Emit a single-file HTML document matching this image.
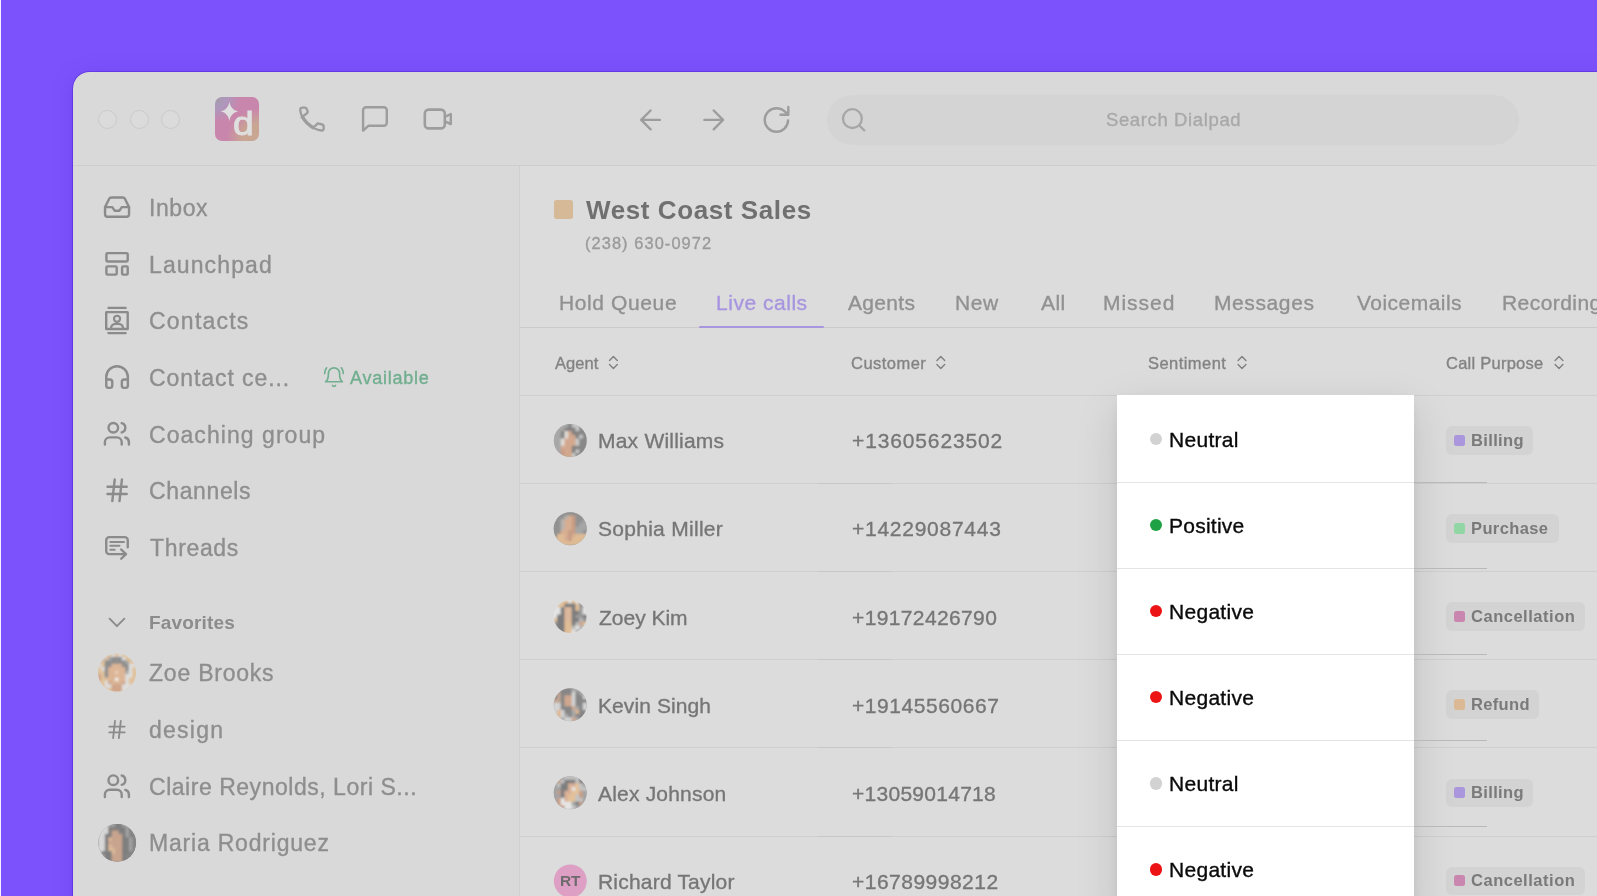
<!DOCTYPE html>
<html lang="en">
<head>
<meta charset="utf-8">
<title>Dialpad – West Coast Sales</title>
<style>
*{box-sizing:border-box;margin:0;padding:0}
html,body{width:1597px;height:896px;overflow:hidden}
body{background:#7c52fd;font-family:"Liberation Sans",Arial,sans-serif;position:relative}
.abs{position:absolute}
.t{position:absolute;white-space:nowrap;line-height:30px;height:30px;display:block;will-change:transform}
#strip{left:0;top:0;width:1px;height:896px;background:#f4f0ff}
#win{left:73px;top:72px;width:1600px;height:900px;background:#d9d9d9;border-top-left-radius:16.5px;box-shadow:0 0 0 .8px rgba(70,25,210,.5),0 3px 24px 0 rgba(30,0,110,.13);overflow:hidden}
#hdrline{left:73px;top:165px;width:1600px;height:1px;background:#cecece}
#main{left:519px;top:166px;width:1100px;height:740px;background:#dcdcdc;border-left:1px solid #cfcfcf}
.tl{width:19px;height:19px;border-radius:50%;border:1.3px solid #cbcbcb;background:#dbdbdb}
#search{left:827px;top:95px;width:692px;height:50px;border-radius:25px;background:#d4d4d4}
#logo{left:214.8px;top:96.9px;width:44.2px;height:44.2px;border-radius:7px;background:radial-gradient(circle at 2% 2%,#a49ba9 0%,#ae97bd 17%,rgba(201,134,172,0) 40%),radial-gradient(circle at 98% 98%,#c9a793 0%,#c9a592 26%,rgba(200,134,172,0) 52%),#c986ac;overflow:hidden}
#sq{left:554px;top:200px;width:19px;height:19px;border-radius:2.5px;background:#d6b996}
#tabline{left:520px;top:327px;width:1100px;height:1px;background:#cacaca}
#tabul{left:699px;top:325.5px;width:125px;height:2.5px;background:#a896de;border-radius:1px}
.rl{left:520px;width:1100px;height:1px;background:#cfcfcf}
.seg{height:1px;background:#b9b9b9}
#panel{left:1117px;top:395px;width:297.3px;height:520px;background:#fff;box-shadow:0 14px 40px 0 rgba(0,0,0,.125),0 5px 12px 0 rgba(0,0,0,.06)}
.pl{left:1117px;width:297.3px;height:1px;background:#e4e4e4}
.dot{width:12.3px;height:12.3px;border-radius:50%}
.bd{left:1446px;height:28.5px;border-radius:6px;background:#d3d3d3}
.bs{left:1454px;width:11px;height:11px;border-radius:2.5px}
.av{width:33px;height:33px;border-radius:50%;overflow:hidden}
svg{position:absolute;overflow:visible}
.ic{fill:none;stroke:#8f8f8f;stroke-width:2;stroke-linecap:round;stroke-linejoin:round}
</style>
</head>
<body>
<div id="strip" class="abs"></div>
<div id="win" class="abs"></div>
<div id="hdrline" class="abs"></div>
<div id="main" class="abs"></div>

<!-- traffic lights -->
<div class="abs tl" style="left:98px;top:109.5px"></div>
<div class="abs tl" style="left:129.7px;top:109.5px"></div>
<div class="abs tl" style="left:161px;top:109.5px"></div>

<div id="logo" class="abs"></div>
<div id="search" class="abs"></div>
<!-- logo glyphs -->
<svg class="abs" style="left:0;top:0" width="1597" height="896" viewBox="0 0 1597 896">
<path d="M229.4 101.60000000000001 C230.1224 106.99000000000001 233.27 110.5768 238.0 111.4 C233.27 112.2232 230.1224 115.81 229.4 121.2 C228.6776 115.81 225.53 112.2232 220.8 111.4 C225.53 110.5768 228.6776 106.99000000000001 229.4 101.60000000000001Z" fill="#dfdfdf"/>
<!-- header icons -->
<g fill="none" stroke="#9d9d9d" stroke-width="2.4" stroke-linecap="round" stroke-linejoin="round">
<path d="M301.7 117.1L307 113.3Q308 112.4 307.6 111.2L306.7 108.8Q306.3 107.6 305 107.6L302.2 107.7Q300.2 107.8 300.2 109.8C300.6 118.5 311 129.5 321.5 130.5Q323.7 130.6 323.7 128.600L323.6 126Q323.6 124.8 322.3 124.5L318.9 123.600Q317.7 123.2 316.8 124.2L313.5 127.6" stroke-width="2.35"/><path d="M302.1 116.3Q306 123.700 314 128.2" stroke-width="3.4" stroke-linecap="butt"/>
<path d="M363.1 130.6V110.3a3 3 0 0 1 3-3h17.7a3 3 0 0 1 3 3v12.4a3 3 0 0 1-3 3H368.6Z"/>
<rect x="424.8" y="109.6" width="20" height="18.8" rx="4" stroke-width="2.6"/>
<path d="M445.6 116.5L450.8 114.1V124.1L445.600 121.600"/>
<path d="M650.6 110.5l-9.4 9.4 9.4 9.4M641.2 119.9h18.7"/>
<path d="M713.7 110.5l9.4 9.4-9.4 9.4M723.1 119.9h-18.7"/>
<path d="M788.1 120.4A11.7 11.7 0 1 1 776.4 108.3c3.3 0 6.4 1.3 8.8 3.6l3.1 2.7M788.3 106.9v7.8h-7.8"/>
</g>
<g fill="none" stroke="#a7a7a7" stroke-width="2.3" stroke-linecap="round"><circle cx="852.4" cy="118.6" r="9.4"/><path d="M859.3 125.5l5 4.9"/></g>
</svg>
<span class="abs" id="logod" style="left:232.7px;top:104.1px;font:400 33px/40px 'Liberation Sans',Arial,sans-serif;color:#dfdfdf;-webkit-text-stroke:0.9px #dfdfdf;height:40px;transform-origin:0 0;transform:scaleX(1.13);will-change:transform">d</span>

<svg class="abs" style="left:0;top:0" width="1597" height="896" viewBox="0 0 1597 896">
<g fill="none" stroke="#8b8b8b" stroke-width="2.4" stroke-linecap="round" stroke-linejoin="round">
<g transform="translate(102.65 192.70) scale(1.2)" stroke-width="2"><path d="M22 12h-6l-2 3h-4l-2-3H2"/><path d="M5.45 5.11 2 12v6a2 2 0 0 0 2 2h16a2 2 0 0 0 2-2v-6l-3.45-6.89A2 2 0 0 0 16.76 4H7.24a2 2 0 0 0-1.79 1.11z"/></g>
<rect x="106.4" y="253.15" width="21.3" height="8.35" rx="1.2"/><rect x="106.4" y="266.4" width="10.3" height="8.2" rx="1.2"/><rect x="122.1" y="266.4" width="5.6" height="8.2" rx="1.2"/>
<path d="M108.4 307.9h17.3M108.3 333.1h17.5" stroke-width="2.1"/><rect x="106.2" y="312.1" width="21.5" height="16.9" rx="0.3" stroke-linejoin="miter"/><circle cx="117.05" cy="318.8" r="3.05" stroke-width="2.2"/><path d="M111 329v-.6a4.6 4.600 0 0 1 4.600-4.600h2.900a4.600 4.600 0 0 1 4.600 4.600v.6" stroke-width="2.2"/>
<g transform="translate(102.65 362.65) scale(1.2)" stroke-width="2"><path d="M3 14h3a2 2 0 0 1 2 2v3a2 2 0 0 1-2 2H5a2 2 0 0 1-2-2v-7a9 9 0 0 1 18 0v7a2 2 0 0 1-2 2h-1a2 2 0 0 1-2-2v-3a2 2 0 0 1 2-2h3"/></g>
<g transform="translate(102.50 419.35) scale(1.2)" stroke-width="2"><path d="M16 21v-2a4 4 0 0 0-4-4H6a4 4 0 0 0-4 4v2"/><circle cx="9" cy="7" r="4"/><path d="M22 21v-2a4 4 0 0 0-3-3.87"/><path d="M16 3.13a4 4 0 0 1 0 7.75"/></g>
<g transform="translate(102.70 475.95) scale(1.2)" stroke-width="2"><path d="M4 9h16M4 15h16M10 3 8 21M16 3l-2 18"/></g>
<path d="M127.75 547.3V540.1a3 3 0 0 0-3-3H109.25a3 3 0 0 0-3 3v11.05a3 3 0 0 0 3 3H125.8M121.2 549.5l4.8 4.65-4.8 4.6"/><path d="M110.3 542h13.700M110.300 545.800h9.200M110.300 549.800h4.400" stroke-width="2"/>
<path d="M109.6 618.7l7.300 7.500 7.500-7.500" stroke-width="1.9"/>
<g transform="translate(105.43 717.98) scale(0.96)" stroke-width="1.9"><path d="M4 9h16M4 15h16M10 3 8 21M16 3l-2 18"/></g>
<g transform="translate(102.50 771.75) scale(1.2)" stroke-width="2"><path d="M16 21v-2a4 4 0 0 0-4-4H6a4 4 0 0 0-4 4v2"/><circle cx="9" cy="7" r="4"/><path d="M22 21v-2a4 4 0 0 0-3-3.87"/><path d="M16 3.13a4 4 0 0 1 0 7.75"/></g>
</g>
<g fill="none" stroke="#72ae8f" stroke-linecap="round" stroke-linejoin="round"><g transform="translate(322.84 365.94) scale(0.93)" stroke-width="1.8"><path d="M6 8a6 6 0 0 1 12 0c0 7 3 9 3 9H3s3-2 3-9"/><path d="M10.3 21a1.94 1.94 0 0 0 3.4 0"/><path d="M4 2C2.8 3.7 2 5.7 2 8"/><path d="M22 8c0-2.300-.8-4.300-2-6"/></g></g>
<g fill="none" stroke="#808080" stroke-width="1.4" stroke-linecap="round" stroke-linejoin="round"><path d="M609.5 360.5l3.9-3.9 3.9 3.9M609.5 364.5l3.9 3.9 3.9-3.9"/><path d="M936.9 360.5l3.9-3.9 3.9 3.9M936.9 364.5l3.9 3.9 3.9-3.9"/><path d="M1238.1 360.5l3.9-3.9 3.9 3.9M1238.1 364.5l3.9 3.9 3.9-3.9"/><path d="M1555.1 360.5l3.9-3.9 3.9 3.9M1555.1 364.5l3.9 3.9 3.9-3.9"/></g>
</svg>

<div id="sq" class="abs"></div>
<div id="tabline" class="abs"></div>
<div id="tabul" class="abs"></div>

<!-- row lines -->
<div class="abs rl" style="top:395px"></div>
<div class="abs rl" style="top:483.1px"></div>
<div class="abs rl" style="top:571.2px"></div>
<div class="abs rl" style="top:659.3px"></div>
<div class="abs rl" style="top:747.4px"></div>
<div class="abs rl" style="top:835.5px"></div>

<!--AVSTART--><svg class="abs" style="left:0;top:0" width="1597" height="896" viewBox="0 0 1597 896">
<defs><filter id="avb" x="-10%" y="-10%" width="120%" height="120%"><feGaussianBlur stdDeviation="1.1"/></filter></defs>
<clipPath id="a0"><circle cx="117" cy="672.7" r="18.9"/></clipPath><g clip-path="url(#a0)"><rect x="96.1" y="651.8" width="41.8" height="41.8" fill="#e0c29e"/><g filter="url(#avb)"><rect x="97.8" y="653.5" width="4.0" height="4.0" fill="#e0c29e"/><rect x="101.2" y="653.5" width="4.0" height="4.0" fill="#e0c29e"/><rect x="104.7" y="653.5" width="4.0" height="4.0" fill="#e0c29e"/><rect x="108.1" y="653.5" width="4.0" height="4.0" fill="#e0c29e"/><rect x="111.5" y="653.5" width="4.0" height="4.0" fill="#dedede"/><rect x="115.0" y="653.5" width="4.0" height="4.0" fill="#e0c29e"/><rect x="118.4" y="653.5" width="4.0" height="4.0" fill="#dedede"/><rect x="121.9" y="653.5" width="4.0" height="4.0" fill="#e0c29e"/><rect x="125.3" y="653.5" width="4.0" height="4.0" fill="#e0c29e"/><rect x="128.7" y="653.5" width="4.0" height="4.0" fill="#e0c29e"/><rect x="132.2" y="653.5" width="4.0" height="4.0" fill="#e0c29e"/><rect x="97.8" y="656.9" width="4.0" height="4.0" fill="#bdbdbd"/><rect x="101.2" y="656.9" width="4.0" height="4.0" fill="#bdbdbd"/><rect x="104.7" y="656.9" width="4.0" height="4.0" fill="#e0c29e"/><rect x="108.1" y="656.9" width="4.0" height="4.0" fill="#a8a8a8"/><rect x="111.5" y="656.9" width="4.0" height="4.0" fill="#8e8e8e"/><rect x="115.0" y="656.9" width="4.0" height="4.0" fill="#8e8e8e"/><rect x="118.4" y="656.9" width="4.0" height="4.0" fill="#8e8e8e"/><rect x="121.9" y="656.9" width="4.0" height="4.0" fill="#dedede"/><rect x="125.3" y="656.9" width="4.0" height="4.0" fill="#e0c29e"/><rect x="128.7" y="656.9" width="4.0" height="4.0" fill="#e0c29e"/><rect x="132.2" y="656.9" width="4.0" height="4.0" fill="#e0c29e"/><rect x="97.8" y="660.4" width="4.0" height="4.0" fill="#bdbdbd"/><rect x="101.2" y="660.4" width="4.0" height="4.0" fill="#e0c29e"/><rect x="104.7" y="660.4" width="4.0" height="4.0" fill="#8e8e8e"/><rect x="108.1" y="660.4" width="4.0" height="4.0" fill="#8e8e8e"/><rect x="111.5" y="660.4" width="4.0" height="4.0" fill="#8e8e8e"/><rect x="115.0" y="660.4" width="4.0" height="4.0" fill="#8e8e8e"/><rect x="118.4" y="660.4" width="4.0" height="4.0" fill="#8e8e8e"/><rect x="121.9" y="660.4" width="4.0" height="4.0" fill="#8e8e8e"/><rect x="125.3" y="660.4" width="4.0" height="4.0" fill="#a8a8a8"/><rect x="128.7" y="660.4" width="4.0" height="4.0" fill="#e0c29e"/><rect x="132.2" y="660.4" width="4.0" height="4.0" fill="#e0c29e"/><rect x="97.8" y="663.8" width="4.0" height="4.0" fill="#dedede"/><rect x="101.2" y="663.8" width="4.0" height="4.0" fill="#e0c29e"/><rect x="104.7" y="663.8" width="4.0" height="4.0" fill="#8e8e8e"/><rect x="108.1" y="663.8" width="4.0" height="4.0" fill="#8e8e8e"/><rect x="111.5" y="663.8" width="4.0" height="4.0" fill="#dcb596"/><rect x="115.0" y="663.8" width="4.0" height="4.0" fill="#dcb596"/><rect x="118.4" y="663.8" width="4.0" height="4.0" fill="#dcb596"/><rect x="121.9" y="663.8" width="4.0" height="4.0" fill="#8e8e8e"/><rect x="125.3" y="663.8" width="4.0" height="4.0" fill="#8e8e8e"/><rect x="128.7" y="663.8" width="4.0" height="4.0" fill="#dedede"/><rect x="132.2" y="663.8" width="4.0" height="4.0" fill="#dedede"/><rect x="97.8" y="667.2" width="4.0" height="4.0" fill="#e0c29e"/><rect x="101.2" y="667.2" width="4.0" height="4.0" fill="#dedede"/><rect x="104.7" y="667.2" width="4.0" height="4.0" fill="#8e8e8e"/><rect x="108.1" y="667.2" width="4.0" height="4.0" fill="#dcb596"/><rect x="111.5" y="667.2" width="4.0" height="4.0" fill="#dcb596"/><rect x="115.0" y="667.2" width="4.0" height="4.0" fill="#dcb596"/><rect x="118.4" y="667.2" width="4.0" height="4.0" fill="#dcb596"/><rect x="121.9" y="667.2" width="4.0" height="4.0" fill="#dcb596"/><rect x="125.3" y="667.2" width="4.0" height="4.0" fill="#8e8e8e"/><rect x="128.7" y="667.2" width="4.0" height="4.0" fill="#dedede"/><rect x="132.2" y="667.2" width="4.0" height="4.0" fill="#e0c29e"/><rect x="97.8" y="670.7" width="4.0" height="4.0" fill="#e0c29e"/><rect x="101.2" y="670.7" width="4.0" height="4.0" fill="#e0c29e"/><rect x="104.7" y="670.7" width="4.0" height="4.0" fill="#8e8e8e"/><rect x="108.1" y="670.7" width="4.0" height="4.0" fill="#dcb596"/><rect x="111.5" y="670.7" width="4.0" height="4.0" fill="#dcb596"/><rect x="115.0" y="670.7" width="4.0" height="4.0" fill="#e6cdb6"/><rect x="118.4" y="670.7" width="4.0" height="4.0" fill="#dcb596"/><rect x="121.9" y="670.7" width="4.0" height="4.0" fill="#dcb596"/><rect x="125.3" y="670.7" width="4.0" height="4.0" fill="#a8a8a8"/><rect x="128.7" y="670.7" width="4.0" height="4.0" fill="#dedede"/><rect x="132.2" y="670.7" width="4.0" height="4.0" fill="#e0c29e"/><rect x="97.8" y="674.1" width="4.0" height="4.0" fill="#d0a58a"/><rect x="101.2" y="674.1" width="4.0" height="4.0" fill="#e0c29e"/><rect x="104.7" y="674.1" width="4.0" height="4.0" fill="#8e8e8e"/><rect x="108.1" y="674.1" width="4.0" height="4.0" fill="#dcb596"/><rect x="111.5" y="674.1" width="4.0" height="4.0" fill="#dcb596"/><rect x="115.0" y="674.1" width="4.0" height="4.0" fill="#dcb596"/><rect x="118.4" y="674.1" width="4.0" height="4.0" fill="#dcb596"/><rect x="121.9" y="674.1" width="4.0" height="4.0" fill="#dcb596"/><rect x="125.3" y="674.1" width="4.0" height="4.0" fill="#dedede"/><rect x="128.7" y="674.1" width="4.0" height="4.0" fill="#dedede"/><rect x="132.2" y="674.1" width="4.0" height="4.0" fill="#e0c29e"/><rect x="97.8" y="677.6" width="4.0" height="4.0" fill="#d0a58a"/><rect x="101.2" y="677.6" width="4.0" height="4.0" fill="#e0c29e"/><rect x="104.7" y="677.6" width="4.0" height="4.0" fill="#e0c29e"/><rect x="108.1" y="677.6" width="4.0" height="4.0" fill="#dcb596"/><rect x="111.5" y="677.6" width="4.0" height="4.0" fill="#dcb596"/><rect x="115.0" y="677.6" width="4.0" height="4.0" fill="#f0ece8"/><rect x="118.4" y="677.6" width="4.0" height="4.0" fill="#dcb596"/><rect x="121.9" y="677.6" width="4.0" height="4.0" fill="#dcb596"/><rect x="125.3" y="677.6" width="4.0" height="4.0" fill="#dedede"/><rect x="128.7" y="677.6" width="4.0" height="4.0" fill="#e0c29e"/><rect x="132.2" y="677.6" width="4.0" height="4.0" fill="#e0c29e"/><rect x="97.8" y="681.0" width="4.0" height="4.0" fill="#e0c29e"/><rect x="101.2" y="681.0" width="4.0" height="4.0" fill="#e0c29e"/><rect x="104.7" y="681.0" width="4.0" height="4.0" fill="#dedede"/><rect x="108.1" y="681.0" width="4.0" height="4.0" fill="#d0a58a"/><rect x="111.5" y="681.0" width="4.0" height="4.0" fill="#dcb596"/><rect x="115.0" y="681.0" width="4.0" height="4.0" fill="#dcb596"/><rect x="118.4" y="681.0" width="4.0" height="4.0" fill="#dcb596"/><rect x="121.9" y="681.0" width="4.0" height="4.0" fill="#d0a58a"/><rect x="125.3" y="681.0" width="4.0" height="4.0" fill="#dedede"/><rect x="128.7" y="681.0" width="4.0" height="4.0" fill="#e0c29e"/><rect x="132.2" y="681.0" width="4.0" height="4.0" fill="#e0c29e"/><rect x="97.8" y="684.4" width="4.0" height="4.0" fill="#e0c29e"/><rect x="101.2" y="684.4" width="4.0" height="4.0" fill="#e0c29e"/><rect x="104.7" y="684.4" width="4.0" height="4.0" fill="#dedede"/><rect x="108.1" y="684.4" width="4.0" height="4.0" fill="#dedede"/><rect x="111.5" y="684.4" width="4.0" height="4.0" fill="#d0a58a"/><rect x="115.0" y="684.4" width="4.0" height="4.0" fill="#d0a58a"/><rect x="118.4" y="684.4" width="4.0" height="4.0" fill="#d0a58a"/><rect x="121.9" y="684.4" width="4.0" height="4.0" fill="#dedede"/><rect x="125.3" y="684.4" width="4.0" height="4.0" fill="#dedede"/><rect x="128.7" y="684.4" width="4.0" height="4.0" fill="#dedede"/><rect x="132.2" y="684.4" width="4.0" height="4.0" fill="#dedede"/><rect x="97.8" y="687.9" width="4.0" height="4.0" fill="#e0c29e"/><rect x="101.2" y="687.9" width="4.0" height="4.0" fill="#e0c29e"/><rect x="104.7" y="687.9" width="4.0" height="4.0" fill="#e0c29e"/><rect x="108.1" y="687.9" width="4.0" height="4.0" fill="#e0c29e"/><rect x="111.5" y="687.9" width="4.0" height="4.0" fill="#d0a58a"/><rect x="115.0" y="687.9" width="4.0" height="4.0" fill="#d0a58a"/><rect x="118.4" y="687.9" width="4.0" height="4.0" fill="#d0a58a"/><rect x="121.9" y="687.9" width="4.0" height="4.0" fill="#dedede"/><rect x="125.3" y="687.9" width="4.0" height="4.0" fill="#dedede"/><rect x="128.7" y="687.9" width="4.0" height="4.0" fill="#dedede"/><rect x="132.2" y="687.9" width="4.0" height="4.0" fill="#dedede"/></g></g>
<clipPath id="a1"><circle cx="117.2" cy="842.8" r="18.9"/></clipPath><g clip-path="url(#a1)"><rect x="96.3" y="821.9" width="41.8" height="41.8" fill="#858585"/><g filter="url(#avb)"><rect x="98.0" y="823.6" width="4.0" height="4.0" fill="#d8d8d8"/><rect x="101.4" y="823.6" width="4.0" height="4.0" fill="#d8d8d8"/><rect x="104.9" y="823.6" width="4.0" height="4.0" fill="#d8d8d8"/><rect x="108.3" y="823.6" width="4.0" height="4.0" fill="#a2a2a2"/><rect x="111.7" y="823.6" width="4.0" height="4.0" fill="#a2a2a2"/><rect x="115.2" y="823.6" width="4.0" height="4.0" fill="#7f7f7f"/><rect x="118.6" y="823.6" width="4.0" height="4.0" fill="#7f7f7f"/><rect x="122.1" y="823.6" width="4.0" height="4.0" fill="#a2a2a2"/><rect x="125.5" y="823.6" width="4.0" height="4.0" fill="#a2a2a2"/><rect x="128.9" y="823.6" width="4.0" height="4.0" fill="#858585"/><rect x="132.4" y="823.6" width="4.0" height="4.0" fill="#858585"/><rect x="98.0" y="827.0" width="4.0" height="4.0" fill="#d8d8d8"/><rect x="101.4" y="827.0" width="4.0" height="4.0" fill="#d8d8d8"/><rect x="104.9" y="827.0" width="4.0" height="4.0" fill="#d8d8d8"/><rect x="108.3" y="827.0" width="4.0" height="4.0" fill="#7f7f7f"/><rect x="111.7" y="827.0" width="4.0" height="4.0" fill="#7f7f7f"/><rect x="115.2" y="827.0" width="4.0" height="4.0" fill="#7f7f7f"/><rect x="118.6" y="827.0" width="4.0" height="4.0" fill="#7f7f7f"/><rect x="122.1" y="827.0" width="4.0" height="4.0" fill="#7f7f7f"/><rect x="125.5" y="827.0" width="4.0" height="4.0" fill="#a2a2a2"/><rect x="128.9" y="827.0" width="4.0" height="4.0" fill="#858585"/><rect x="132.4" y="827.0" width="4.0" height="4.0" fill="#858585"/><rect x="98.0" y="830.5" width="4.0" height="4.0" fill="#d8d8d8"/><rect x="101.4" y="830.5" width="4.0" height="4.0" fill="#d8d8d8"/><rect x="104.9" y="830.5" width="4.0" height="4.0" fill="#d8d8d8"/><rect x="108.3" y="830.5" width="4.0" height="4.0" fill="#7f7f7f"/><rect x="111.7" y="830.5" width="4.0" height="4.0" fill="#c9a48e"/><rect x="115.2" y="830.5" width="4.0" height="4.0" fill="#c9a48e"/><rect x="118.6" y="830.5" width="4.0" height="4.0" fill="#7f7f7f"/><rect x="122.1" y="830.5" width="4.0" height="4.0" fill="#7f7f7f"/><rect x="125.5" y="830.5" width="4.0" height="4.0" fill="#a2a2a2"/><rect x="128.9" y="830.5" width="4.0" height="4.0" fill="#858585"/><rect x="132.4" y="830.5" width="4.0" height="4.0" fill="#858585"/><rect x="98.0" y="833.9" width="4.0" height="4.0" fill="#d8d8d8"/><rect x="101.4" y="833.9" width="4.0" height="4.0" fill="#d8d8d8"/><rect x="104.9" y="833.9" width="4.0" height="4.0" fill="#7f7f7f"/><rect x="108.3" y="833.9" width="4.0" height="4.0" fill="#7f7f7f"/><rect x="111.7" y="833.9" width="4.0" height="4.0" fill="#c9a48e"/><rect x="115.2" y="833.9" width="4.0" height="4.0" fill="#c9a48e"/><rect x="118.6" y="833.9" width="4.0" height="4.0" fill="#c9a48e"/><rect x="122.1" y="833.9" width="4.0" height="4.0" fill="#7f7f7f"/><rect x="125.5" y="833.9" width="4.0" height="4.0" fill="#a2a2a2"/><rect x="128.9" y="833.9" width="4.0" height="4.0" fill="#858585"/><rect x="132.4" y="833.9" width="4.0" height="4.0" fill="#858585"/><rect x="98.0" y="837.3" width="4.0" height="4.0" fill="#d8d8d8"/><rect x="101.4" y="837.3" width="4.0" height="4.0" fill="#d8d8d8"/><rect x="104.9" y="837.3" width="4.0" height="4.0" fill="#7f7f7f"/><rect x="108.3" y="837.3" width="4.0" height="4.0" fill="#dcb898"/><rect x="111.7" y="837.3" width="4.0" height="4.0" fill="#c9a48e"/><rect x="115.2" y="837.3" width="4.0" height="4.0" fill="#c9a48e"/><rect x="118.6" y="837.3" width="4.0" height="4.0" fill="#c9a48e"/><rect x="122.1" y="837.3" width="4.0" height="4.0" fill="#7f7f7f"/><rect x="125.5" y="837.3" width="4.0" height="4.0" fill="#7f7f7f"/><rect x="128.9" y="837.3" width="4.0" height="4.0" fill="#a2a2a2"/><rect x="132.4" y="837.3" width="4.0" height="4.0" fill="#858585"/><rect x="98.0" y="840.8" width="4.0" height="4.0" fill="#d8d8d8"/><rect x="101.4" y="840.8" width="4.0" height="4.0" fill="#d8d8d8"/><rect x="104.9" y="840.8" width="4.0" height="4.0" fill="#7f7f7f"/><rect x="108.3" y="840.8" width="4.0" height="4.0" fill="#c9a48e"/><rect x="111.7" y="840.8" width="4.0" height="4.0" fill="#c9a48e"/><rect x="115.2" y="840.8" width="4.0" height="4.0" fill="#c9a48e"/><rect x="118.6" y="840.8" width="4.0" height="4.0" fill="#c9a48e"/><rect x="122.1" y="840.8" width="4.0" height="4.0" fill="#7f7f7f"/><rect x="125.5" y="840.8" width="4.0" height="4.0" fill="#7f7f7f"/><rect x="128.9" y="840.8" width="4.0" height="4.0" fill="#a2a2a2"/><rect x="132.4" y="840.8" width="4.0" height="4.0" fill="#858585"/><rect x="98.0" y="844.2" width="4.0" height="4.0" fill="#d8d8d8"/><rect x="101.4" y="844.2" width="4.0" height="4.0" fill="#d8d8d8"/><rect x="104.9" y="844.2" width="4.0" height="4.0" fill="#7f7f7f"/><rect x="108.3" y="844.2" width="4.0" height="4.0" fill="#dcb898"/><rect x="111.7" y="844.2" width="4.0" height="4.0" fill="#c9a48e"/><rect x="115.2" y="844.2" width="4.0" height="4.0" fill="#c9a48e"/><rect x="118.6" y="844.2" width="4.0" height="4.0" fill="#c9a48e"/><rect x="122.1" y="844.2" width="4.0" height="4.0" fill="#7f7f7f"/><rect x="125.5" y="844.2" width="4.0" height="4.0" fill="#7f7f7f"/><rect x="128.9" y="844.2" width="4.0" height="4.0" fill="#a2a2a2"/><rect x="132.4" y="844.2" width="4.0" height="4.0" fill="#858585"/><rect x="98.0" y="847.7" width="4.0" height="4.0" fill="#d8d8d8"/><rect x="101.4" y="847.7" width="4.0" height="4.0" fill="#d8d8d8"/><rect x="104.9" y="847.7" width="4.0" height="4.0" fill="#7f7f7f"/><rect x="108.3" y="847.7" width="4.0" height="4.0" fill="#dcb898"/><rect x="111.7" y="847.7" width="4.0" height="4.0" fill="#dcb898"/><rect x="115.2" y="847.7" width="4.0" height="4.0" fill="#c9a48e"/><rect x="118.6" y="847.7" width="4.0" height="4.0" fill="#c9a48e"/><rect x="122.1" y="847.7" width="4.0" height="4.0" fill="#7f7f7f"/><rect x="125.5" y="847.7" width="4.0" height="4.0" fill="#7f7f7f"/><rect x="128.9" y="847.7" width="4.0" height="4.0" fill="#a2a2a2"/><rect x="132.4" y="847.7" width="4.0" height="4.0" fill="#858585"/><rect x="98.0" y="851.1" width="4.0" height="4.0" fill="#d8d8d8"/><rect x="101.4" y="851.1" width="4.0" height="4.0" fill="#7f7f7f"/><rect x="104.9" y="851.1" width="4.0" height="4.0" fill="#7f7f7f"/><rect x="108.3" y="851.1" width="4.0" height="4.0" fill="#7f7f7f"/><rect x="111.7" y="851.1" width="4.0" height="4.0" fill="#dcb898"/><rect x="115.2" y="851.1" width="4.0" height="4.0" fill="#c9a48e"/><rect x="118.6" y="851.1" width="4.0" height="4.0" fill="#c9a48e"/><rect x="122.1" y="851.1" width="4.0" height="4.0" fill="#7f7f7f"/><rect x="125.5" y="851.1" width="4.0" height="4.0" fill="#7f7f7f"/><rect x="128.9" y="851.1" width="4.0" height="4.0" fill="#858585"/><rect x="132.4" y="851.1" width="4.0" height="4.0" fill="#858585"/><rect x="98.0" y="854.5" width="4.0" height="4.0" fill="#a2a2a2"/><rect x="101.4" y="854.5" width="4.0" height="4.0" fill="#a2a2a2"/><rect x="104.9" y="854.5" width="4.0" height="4.0" fill="#7f7f7f"/><rect x="108.3" y="854.5" width="4.0" height="4.0" fill="#7f7f7f"/><rect x="111.7" y="854.5" width="4.0" height="4.0" fill="#c9a48e"/><rect x="115.2" y="854.5" width="4.0" height="4.0" fill="#c9a48e"/><rect x="118.6" y="854.5" width="4.0" height="4.0" fill="#c9a48e"/><rect x="122.1" y="854.5" width="4.0" height="4.0" fill="#7f7f7f"/><rect x="125.5" y="854.5" width="4.0" height="4.0" fill="#858585"/><rect x="128.9" y="854.5" width="4.0" height="4.0" fill="#858585"/><rect x="132.4" y="854.5" width="4.0" height="4.0" fill="#858585"/><rect x="98.0" y="858.0" width="4.0" height="4.0" fill="#a2a2a2"/><rect x="101.4" y="858.0" width="4.0" height="4.0" fill="#a2a2a2"/><rect x="104.9" y="858.0" width="4.0" height="4.0" fill="#7f7f7f"/><rect x="108.3" y="858.0" width="4.0" height="4.0" fill="#7f7f7f"/><rect x="111.7" y="858.0" width="4.0" height="4.0" fill="#c9a48e"/><rect x="115.2" y="858.0" width="4.0" height="4.0" fill="#c9a48e"/><rect x="118.6" y="858.0" width="4.0" height="4.0" fill="#c9a48e"/><rect x="122.1" y="858.0" width="4.0" height="4.0" fill="#7f7f7f"/><rect x="125.5" y="858.0" width="4.0" height="4.0" fill="#858585"/><rect x="128.9" y="858.0" width="4.0" height="4.0" fill="#858585"/><rect x="132.4" y="858.0" width="4.0" height="4.0" fill="#858585"/></g></g>
<clipPath id="a2"><circle cx="570.3" cy="440.6" r="16.5"/></clipPath><g clip-path="url(#a2)"><rect x="551.8" y="422.1" width="37.0" height="37.0" fill="#a8a8a8"/><g filter="url(#avb)"><rect x="553.5" y="423.8" width="4.3" height="4.3" fill="#a8a8a8"/><rect x="557.2" y="423.8" width="4.3" height="4.3" fill="#a8a8a8"/><rect x="560.8" y="423.8" width="4.3" height="4.3" fill="#a8a8a8"/><rect x="564.5" y="423.8" width="4.3" height="4.3" fill="#a8a8a8"/><rect x="568.2" y="423.8" width="4.3" height="4.3" fill="#828282"/><rect x="571.8" y="423.8" width="4.3" height="4.3" fill="#c9c9c9"/><rect x="575.5" y="423.8" width="4.3" height="4.3" fill="#c9c9c9"/><rect x="579.2" y="423.8" width="4.3" height="4.3" fill="#888888"/><rect x="582.8" y="423.8" width="4.3" height="4.3" fill="#888888"/><rect x="553.5" y="427.5" width="4.3" height="4.3" fill="#a8a8a8"/><rect x="557.2" y="427.5" width="4.3" height="4.3" fill="#a8a8a8"/><rect x="560.8" y="427.5" width="4.3" height="4.3" fill="#a8a8a8"/><rect x="564.5" y="427.5" width="4.3" height="4.3" fill="#828282"/><rect x="568.2" y="427.5" width="4.3" height="4.3" fill="#828282"/><rect x="571.8" y="427.5" width="4.3" height="4.3" fill="#828282"/><rect x="575.5" y="427.5" width="4.3" height="4.3" fill="#c9c9c9"/><rect x="579.2" y="427.5" width="4.3" height="4.3" fill="#888888"/><rect x="582.8" y="427.5" width="4.3" height="4.3" fill="#888888"/><rect x="553.5" y="431.1" width="4.3" height="4.3" fill="#a8a8a8"/><rect x="557.2" y="431.1" width="4.3" height="4.3" fill="#a8a8a8"/><rect x="560.8" y="431.1" width="4.3" height="4.3" fill="#828282"/><rect x="564.5" y="431.1" width="4.3" height="4.3" fill="#e2ddd8"/><rect x="568.2" y="431.1" width="4.3" height="4.3" fill="#d3a88e"/><rect x="571.8" y="431.1" width="4.3" height="4.3" fill="#828282"/><rect x="575.5" y="431.1" width="4.3" height="4.3" fill="#828282"/><rect x="579.2" y="431.1" width="4.3" height="4.3" fill="#888888"/><rect x="582.8" y="431.1" width="4.3" height="4.3" fill="#888888"/><rect x="553.5" y="434.8" width="4.3" height="4.3" fill="#a8a8a8"/><rect x="557.2" y="434.8" width="4.3" height="4.3" fill="#a8a8a8"/><rect x="560.8" y="434.8" width="4.3" height="4.3" fill="#828282"/><rect x="564.5" y="434.8" width="4.3" height="4.3" fill="#e2ddd8"/><rect x="568.2" y="434.8" width="4.3" height="4.3" fill="#d3a88e"/><rect x="571.8" y="434.8" width="4.3" height="4.3" fill="#d3a88e"/><rect x="575.5" y="434.8" width="4.3" height="4.3" fill="#828282"/><rect x="579.2" y="434.8" width="4.3" height="4.3" fill="#c9c9c9"/><rect x="582.8" y="434.8" width="4.3" height="4.3" fill="#888888"/><rect x="553.5" y="438.5" width="4.3" height="4.3" fill="#a8a8a8"/><rect x="557.2" y="438.5" width="4.3" height="4.3" fill="#a8a8a8"/><rect x="560.8" y="438.5" width="4.3" height="4.3" fill="#e2ddd8"/><rect x="564.5" y="438.5" width="4.3" height="4.3" fill="#d3a88e"/><rect x="568.2" y="438.5" width="4.3" height="4.3" fill="#d3a88e"/><rect x="571.8" y="438.5" width="4.3" height="4.3" fill="#d3a88e"/><rect x="575.5" y="438.5" width="4.3" height="4.3" fill="#c9c9c9"/><rect x="579.2" y="438.5" width="4.3" height="4.3" fill="#888888"/><rect x="582.8" y="438.5" width="4.3" height="4.3" fill="#888888"/><rect x="553.5" y="442.1" width="4.3" height="4.3" fill="#a8a8a8"/><rect x="557.2" y="442.1" width="4.3" height="4.3" fill="#a8a8a8"/><rect x="560.8" y="442.1" width="4.3" height="4.3" fill="#e2ddd8"/><rect x="564.5" y="442.1" width="4.3" height="4.3" fill="#d3a88e"/><rect x="568.2" y="442.1" width="4.3" height="4.3" fill="#d3a88e"/><rect x="571.8" y="442.1" width="4.3" height="4.3" fill="#d3a88e"/><rect x="575.5" y="442.1" width="4.3" height="4.3" fill="#c9c9c9"/><rect x="579.2" y="442.1" width="4.3" height="4.3" fill="#888888"/><rect x="582.8" y="442.1" width="4.3" height="4.3" fill="#888888"/><rect x="553.5" y="445.8" width="4.3" height="4.3" fill="#a8a8a8"/><rect x="557.2" y="445.8" width="4.3" height="4.3" fill="#a8a8a8"/><rect x="560.8" y="445.8" width="4.3" height="4.3" fill="#d3a88e"/><rect x="564.5" y="445.8" width="4.3" height="4.3" fill="#d3a88e"/><rect x="568.2" y="445.8" width="4.3" height="4.3" fill="#d3a88e"/><rect x="571.8" y="445.8" width="4.3" height="4.3" fill="#828282"/><rect x="575.5" y="445.8" width="4.3" height="4.3" fill="#828282"/><rect x="579.2" y="445.8" width="4.3" height="4.3" fill="#888888"/><rect x="582.8" y="445.8" width="4.3" height="4.3" fill="#888888"/><rect x="553.5" y="449.5" width="4.3" height="4.3" fill="#a8a8a8"/><rect x="557.2" y="449.5" width="4.3" height="4.3" fill="#a8a8a8"/><rect x="560.8" y="449.5" width="4.3" height="4.3" fill="#c99d84"/><rect x="564.5" y="449.5" width="4.3" height="4.3" fill="#d3a88e"/><rect x="568.2" y="449.5" width="4.3" height="4.3" fill="#d3a88e"/><rect x="571.8" y="449.5" width="4.3" height="4.3" fill="#828282"/><rect x="575.5" y="449.5" width="4.3" height="4.3" fill="#c9c9c9"/><rect x="579.2" y="449.5" width="4.3" height="4.3" fill="#888888"/><rect x="582.8" y="449.5" width="4.3" height="4.3" fill="#888888"/><rect x="553.5" y="453.1" width="4.3" height="4.3" fill="#a8a8a8"/><rect x="557.2" y="453.1" width="4.3" height="4.3" fill="#a8a8a8"/><rect x="560.8" y="453.1" width="4.3" height="4.3" fill="#c99d84"/><rect x="564.5" y="453.1" width="4.3" height="4.3" fill="#d3a88e"/><rect x="568.2" y="453.1" width="4.3" height="4.3" fill="#d3a88e"/><rect x="571.8" y="453.1" width="4.3" height="4.3" fill="#c9c9c9"/><rect x="575.5" y="453.1" width="4.3" height="4.3" fill="#888888"/><rect x="579.2" y="453.1" width="4.3" height="4.3" fill="#888888"/><rect x="582.8" y="453.1" width="4.3" height="4.3" fill="#888888"/></g></g>
<clipPath id="a3"><circle cx="570.2" cy="528.7" r="16.5"/></clipPath><g clip-path="url(#a3)"><rect x="551.7" y="510.2" width="37.0" height="37.0" fill="#929292"/><g filter="url(#avb)"><rect x="553.4" y="511.9" width="4.3" height="4.3" fill="#929292"/><rect x="557.1" y="511.9" width="4.3" height="4.3" fill="#929292"/><rect x="560.7" y="511.9" width="4.3" height="4.3" fill="#929292"/><rect x="564.4" y="511.9" width="4.3" height="4.3" fill="#929292"/><rect x="568.1" y="511.9" width="4.3" height="4.3" fill="#929292"/><rect x="571.7" y="511.9" width="4.3" height="4.3" fill="#929292"/><rect x="575.4" y="511.9" width="4.3" height="4.3" fill="#929292"/><rect x="579.1" y="511.9" width="4.3" height="4.3" fill="#929292"/><rect x="582.7" y="511.9" width="4.3" height="4.3" fill="#929292"/><rect x="553.4" y="515.6" width="4.3" height="4.3" fill="#929292"/><rect x="557.1" y="515.6" width="4.3" height="4.3" fill="#929292"/><rect x="560.7" y="515.6" width="4.3" height="4.3" fill="#929292"/><rect x="564.4" y="515.6" width="4.3" height="4.3" fill="#b8b4ae"/><rect x="568.1" y="515.6" width="4.3" height="4.3" fill="#d8ae92"/><rect x="571.7" y="515.6" width="4.3" height="4.3" fill="#c79c84"/><rect x="575.4" y="515.6" width="4.3" height="4.3" fill="#929292"/><rect x="579.1" y="515.6" width="4.3" height="4.3" fill="#929292"/><rect x="582.7" y="515.6" width="4.3" height="4.3" fill="#929292"/><rect x="553.4" y="519.2" width="4.3" height="4.3" fill="#929292"/><rect x="557.1" y="519.2" width="4.3" height="4.3" fill="#929292"/><rect x="560.7" y="519.2" width="4.3" height="4.3" fill="#b8b4ae"/><rect x="564.4" y="519.2" width="4.3" height="4.3" fill="#d8ae92"/><rect x="568.1" y="519.2" width="4.3" height="4.3" fill="#d8ae92"/><rect x="571.7" y="519.2" width="4.3" height="4.3" fill="#c79c84"/><rect x="575.4" y="519.2" width="4.3" height="4.3" fill="#929292"/><rect x="579.1" y="519.2" width="4.3" height="4.3" fill="#929292"/><rect x="582.7" y="519.2" width="4.3" height="4.3" fill="#a6a6a6"/><rect x="553.4" y="522.9" width="4.3" height="4.3" fill="#929292"/><rect x="557.1" y="522.9" width="4.3" height="4.3" fill="#929292"/><rect x="560.7" y="522.9" width="4.3" height="4.3" fill="#b8b4ae"/><rect x="564.4" y="522.9" width="4.3" height="4.3" fill="#d8ae92"/><rect x="568.1" y="522.9" width="4.3" height="4.3" fill="#d8ae92"/><rect x="571.7" y="522.9" width="4.3" height="4.3" fill="#c79c84"/><rect x="575.4" y="522.9" width="4.3" height="4.3" fill="#929292"/><rect x="579.1" y="522.9" width="4.3" height="4.3" fill="#a6a6a6"/><rect x="582.7" y="522.9" width="4.3" height="4.3" fill="#a6a6a6"/><rect x="553.4" y="526.6" width="4.3" height="4.3" fill="#929292"/><rect x="557.1" y="526.6" width="4.3" height="4.3" fill="#929292"/><rect x="560.7" y="526.6" width="4.3" height="4.3" fill="#b8b4ae"/><rect x="564.4" y="526.6" width="4.3" height="4.3" fill="#d8ae92"/><rect x="568.1" y="526.6" width="4.3" height="4.3" fill="#d8ae92"/><rect x="571.7" y="526.6" width="4.3" height="4.3" fill="#c79c84"/><rect x="575.4" y="526.6" width="4.3" height="4.3" fill="#a6a6a6"/><rect x="579.1" y="526.6" width="4.3" height="4.3" fill="#a6a6a6"/><rect x="582.7" y="526.6" width="4.3" height="4.3" fill="#a6a6a6"/><rect x="553.4" y="530.2" width="4.3" height="4.3" fill="#929292"/><rect x="557.1" y="530.2" width="4.3" height="4.3" fill="#929292"/><rect x="560.7" y="530.2" width="4.3" height="4.3" fill="#d8ae92"/><rect x="564.4" y="530.2" width="4.3" height="4.3" fill="#d8ae92"/><rect x="568.1" y="530.2" width="4.3" height="4.3" fill="#c79c84"/><rect x="571.7" y="530.2" width="4.3" height="4.3" fill="#c79c84"/><rect x="575.4" y="530.2" width="4.3" height="4.3" fill="#a6a6a6"/><rect x="579.1" y="530.2" width="4.3" height="4.3" fill="#a6a6a6"/><rect x="582.7" y="530.2" width="4.3" height="4.3" fill="#929292"/><rect x="553.4" y="533.9" width="4.3" height="4.3" fill="#929292"/><rect x="557.1" y="533.9" width="4.3" height="4.3" fill="#dfbb94"/><rect x="560.7" y="533.9" width="4.3" height="4.3" fill="#dfbb94"/><rect x="564.4" y="533.9" width="4.3" height="4.3" fill="#d8ae92"/><rect x="568.1" y="533.9" width="4.3" height="4.3" fill="#c79c84"/><rect x="571.7" y="533.9" width="4.3" height="4.3" fill="#d8ae92"/><rect x="575.4" y="533.9" width="4.3" height="4.3" fill="#dfbb94"/><rect x="579.1" y="533.9" width="4.3" height="4.3" fill="#dfbb94"/><rect x="582.7" y="533.9" width="4.3" height="4.3" fill="#dfbb94"/><rect x="553.4" y="537.6" width="4.3" height="4.3" fill="#dfbb94"/><rect x="557.1" y="537.6" width="4.3" height="4.3" fill="#dfbb94"/><rect x="560.7" y="537.6" width="4.3" height="4.3" fill="#dfbb94"/><rect x="564.4" y="537.6" width="4.3" height="4.3" fill="#d8ae92"/><rect x="568.1" y="537.6" width="4.3" height="4.3" fill="#c79c84"/><rect x="571.7" y="537.6" width="4.3" height="4.3" fill="#dfbb94"/><rect x="575.4" y="537.6" width="4.3" height="4.3" fill="#dfbb94"/><rect x="579.1" y="537.6" width="4.3" height="4.3" fill="#dfbb94"/><rect x="582.7" y="537.6" width="4.3" height="4.3" fill="#dfbb94"/><rect x="553.4" y="541.2" width="4.3" height="4.3" fill="#dfbb94"/><rect x="557.1" y="541.2" width="4.3" height="4.3" fill="#dfbb94"/><rect x="560.7" y="541.2" width="4.3" height="4.3" fill="#dfbb94"/><rect x="564.4" y="541.2" width="4.3" height="4.3" fill="#dfbb94"/><rect x="568.1" y="541.2" width="4.3" height="4.3" fill="#dfbb94"/><rect x="571.7" y="541.2" width="4.3" height="4.3" fill="#dfbb94"/><rect x="575.4" y="541.2" width="4.3" height="4.3" fill="#dfbb94"/><rect x="579.1" y="541.2" width="4.3" height="4.3" fill="#dfbb94"/><rect x="582.7" y="541.2" width="4.3" height="4.3" fill="#dfbb94"/></g></g>
<clipPath id="a4"><circle cx="570.2" cy="616.7" r="16.5"/></clipPath><g clip-path="url(#a4)"><rect x="551.7" y="598.2" width="37.0" height="37.0" fill="#e4e4e4"/><g filter="url(#avb)"><rect x="553.4" y="599.9" width="4.3" height="4.3" fill="#e4e4e4"/><rect x="557.1" y="599.9" width="4.3" height="4.3" fill="#e4e4e4"/><rect x="560.7" y="599.9" width="4.3" height="4.3" fill="#e0bf98"/><rect x="564.4" y="599.9" width="4.3" height="4.3" fill="#e0bf98"/><rect x="568.1" y="599.9" width="4.3" height="4.3" fill="#e4e4e4"/><rect x="571.7" y="599.9" width="4.3" height="4.3" fill="#e0bf98"/><rect x="575.4" y="599.9" width="4.3" height="4.3" fill="#e4e4e4"/><rect x="579.1" y="599.9" width="4.3" height="4.3" fill="#9a9a9a"/><rect x="582.7" y="599.9" width="4.3" height="4.3" fill="#9a9a9a"/><rect x="553.4" y="603.6" width="4.3" height="4.3" fill="#e4e4e4"/><rect x="557.1" y="603.6" width="4.3" height="4.3" fill="#e0bf98"/><rect x="560.7" y="603.6" width="4.3" height="4.3" fill="#e0bf98"/><rect x="564.4" y="603.6" width="4.3" height="4.3" fill="#7c7c7c"/><rect x="568.1" y="603.6" width="4.3" height="4.3" fill="#7c7c7c"/><rect x="571.7" y="603.6" width="4.3" height="4.3" fill="#7c7c7c"/><rect x="575.4" y="603.6" width="4.3" height="4.3" fill="#e0bf98"/><rect x="579.1" y="603.6" width="4.3" height="4.3" fill="#9a9a9a"/><rect x="582.7" y="603.6" width="4.3" height="4.3" fill="#9a9a9a"/><rect x="553.4" y="607.2" width="4.3" height="4.3" fill="#e4e4e4"/><rect x="557.1" y="607.2" width="4.3" height="4.3" fill="#e4e4e4"/><rect x="560.7" y="607.2" width="4.3" height="4.3" fill="#7c7c7c"/><rect x="564.4" y="607.2" width="4.3" height="4.3" fill="#dcb79b"/><rect x="568.1" y="607.2" width="4.3" height="4.3" fill="#dcb79b"/><rect x="571.7" y="607.2" width="4.3" height="4.3" fill="#7c7c7c"/><rect x="575.4" y="607.2" width="4.3" height="4.3" fill="#e0bf98"/><rect x="579.1" y="607.2" width="4.3" height="4.3" fill="#9a9a9a"/><rect x="582.7" y="607.2" width="4.3" height="4.3" fill="#e4e4e4"/><rect x="553.4" y="610.9" width="4.3" height="4.3" fill="#e4e4e4"/><rect x="557.1" y="610.9" width="4.3" height="4.3" fill="#e4e4e4"/><rect x="560.7" y="610.9" width="4.3" height="4.3" fill="#7c7c7c"/><rect x="564.4" y="610.9" width="4.3" height="4.3" fill="#dcb79b"/><rect x="568.1" y="610.9" width="4.3" height="4.3" fill="#dcb79b"/><rect x="571.7" y="610.9" width="4.3" height="4.3" fill="#7c7c7c"/><rect x="575.4" y="610.9" width="4.3" height="4.3" fill="#7c7c7c"/><rect x="579.1" y="610.9" width="4.3" height="4.3" fill="#9a9a9a"/><rect x="582.7" y="610.9" width="4.3" height="4.3" fill="#e4e4e4"/><rect x="553.4" y="614.6" width="4.3" height="4.3" fill="#e4e4e4"/><rect x="557.1" y="614.6" width="4.3" height="4.3" fill="#7c7c7c"/><rect x="560.7" y="614.6" width="4.3" height="4.3" fill="#7c7c7c"/><rect x="564.4" y="614.6" width="4.3" height="4.3" fill="#dcb79b"/><rect x="568.1" y="614.6" width="4.3" height="4.3" fill="#dcb79b"/><rect x="571.7" y="614.6" width="4.3" height="4.3" fill="#7c7c7c"/><rect x="575.4" y="614.6" width="4.3" height="4.3" fill="#9a9a9a"/><rect x="579.1" y="614.6" width="4.3" height="4.3" fill="#9a9a9a"/><rect x="582.7" y="614.6" width="4.3" height="4.3" fill="#7c7c7c"/><rect x="553.4" y="618.2" width="4.3" height="4.3" fill="#e0bf98"/><rect x="557.1" y="618.2" width="4.3" height="4.3" fill="#7c7c7c"/><rect x="560.7" y="618.2" width="4.3" height="4.3" fill="#7c7c7c"/><rect x="564.4" y="618.2" width="4.3" height="4.3" fill="#dcb79b"/><rect x="568.1" y="618.2" width="4.3" height="4.3" fill="#dcb79b"/><rect x="571.7" y="618.2" width="4.3" height="4.3" fill="#7c7c7c"/><rect x="575.4" y="618.2" width="4.3" height="4.3" fill="#7c7c7c"/><rect x="579.1" y="618.2" width="4.3" height="4.3" fill="#b8b8b8"/><rect x="582.7" y="618.2" width="4.3" height="4.3" fill="#9a9a9a"/><rect x="553.4" y="621.9" width="4.3" height="4.3" fill="#9a9a9a"/><rect x="557.1" y="621.9" width="4.3" height="4.3" fill="#7c7c7c"/><rect x="560.7" y="621.9" width="4.3" height="4.3" fill="#7c7c7c"/><rect x="564.4" y="621.9" width="4.3" height="4.3" fill="#e0bd96"/><rect x="568.1" y="621.9" width="4.3" height="4.3" fill="#e0bd96"/><rect x="571.7" y="621.9" width="4.3" height="4.3" fill="#7c7c7c"/><rect x="575.4" y="621.9" width="4.3" height="4.3" fill="#b8b8b8"/><rect x="579.1" y="621.9" width="4.3" height="4.3" fill="#c9a288"/><rect x="582.7" y="621.9" width="4.3" height="4.3" fill="#e0bf98"/><rect x="553.4" y="625.6" width="4.3" height="4.3" fill="#9a9a9a"/><rect x="557.1" y="625.6" width="4.3" height="4.3" fill="#7c7c7c"/><rect x="560.7" y="625.6" width="4.3" height="4.3" fill="#7c7c7c"/><rect x="564.4" y="625.6" width="4.3" height="4.3" fill="#e0bd96"/><rect x="568.1" y="625.6" width="4.3" height="4.3" fill="#e0bd96"/><rect x="571.7" y="625.6" width="4.3" height="4.3" fill="#b8b8b8"/><rect x="575.4" y="625.6" width="4.3" height="4.3" fill="#e4e4e4"/><rect x="579.1" y="625.6" width="4.3" height="4.3" fill="#b8b8b8"/><rect x="582.7" y="625.6" width="4.3" height="4.3" fill="#b8b8b8"/><rect x="553.4" y="629.2" width="4.3" height="4.3" fill="#9a9a9a"/><rect x="557.1" y="629.2" width="4.3" height="4.3" fill="#7c7c7c"/><rect x="560.7" y="629.2" width="4.3" height="4.3" fill="#7c7c7c"/><rect x="564.4" y="629.2" width="4.3" height="4.3" fill="#e0bd96"/><rect x="568.1" y="629.2" width="4.3" height="4.3" fill="#e0bd96"/><rect x="571.7" y="629.2" width="4.3" height="4.3" fill="#e4e4e4"/><rect x="575.4" y="629.2" width="4.3" height="4.3" fill="#b8b8b8"/><rect x="579.1" y="629.2" width="4.3" height="4.3" fill="#b8b8b8"/><rect x="582.7" y="629.2" width="4.3" height="4.3" fill="#b8b8b8"/></g></g>
<clipPath id="a5"><circle cx="570.2" cy="704.8" r="16.5"/></clipPath><g clip-path="url(#a5)"><rect x="551.7" y="686.3" width="37.0" height="37.0" fill="#a9a9a9"/><g filter="url(#avb)"><rect x="553.4" y="688.0" width="4.3" height="4.3" fill="#868686"/><rect x="557.1" y="688.0" width="4.3" height="4.3" fill="#868686"/><rect x="560.7" y="688.0" width="4.3" height="4.3" fill="#868686"/><rect x="564.4" y="688.0" width="4.3" height="4.3" fill="#868686"/><rect x="568.1" y="688.0" width="4.3" height="4.3" fill="#868686"/><rect x="571.7" y="688.0" width="4.3" height="4.3" fill="#a9a9a9"/><rect x="575.4" y="688.0" width="4.3" height="4.3" fill="#a9a9a9"/><rect x="579.1" y="688.0" width="4.3" height="4.3" fill="#a9a9a9"/><rect x="582.7" y="688.0" width="4.3" height="4.3" fill="#a9a9a9"/><rect x="553.4" y="691.7" width="4.3" height="4.3" fill="#868686"/><rect x="557.1" y="691.7" width="4.3" height="4.3" fill="#c3a592"/><rect x="560.7" y="691.7" width="4.3" height="4.3" fill="#868686"/><rect x="564.4" y="691.7" width="4.3" height="4.3" fill="#868686"/><rect x="568.1" y="691.7" width="4.3" height="4.3" fill="#868686"/><rect x="571.7" y="691.7" width="4.3" height="4.3" fill="#d4d4d4"/><rect x="575.4" y="691.7" width="4.3" height="4.3" fill="#868686"/><rect x="579.1" y="691.7" width="4.3" height="4.3" fill="#a9a9a9"/><rect x="582.7" y="691.7" width="4.3" height="4.3" fill="#a9a9a9"/><rect x="553.4" y="695.3" width="4.3" height="4.3" fill="#868686"/><rect x="557.1" y="695.3" width="4.3" height="4.3" fill="#c3a592"/><rect x="560.7" y="695.3" width="4.3" height="4.3" fill="#868686"/><rect x="564.4" y="695.3" width="4.3" height="4.3" fill="#cfa78f"/><rect x="568.1" y="695.3" width="4.3" height="4.3" fill="#cfa78f"/><rect x="571.7" y="695.3" width="4.3" height="4.3" fill="#d4d4d4"/><rect x="575.4" y="695.3" width="4.3" height="4.3" fill="#868686"/><rect x="579.1" y="695.3" width="4.3" height="4.3" fill="#868686"/><rect x="582.7" y="695.3" width="4.3" height="4.3" fill="#d4d4d4"/><rect x="553.4" y="699.0" width="4.3" height="4.3" fill="#c3a592"/><rect x="557.1" y="699.0" width="4.3" height="4.3" fill="#c3a592"/><rect x="560.7" y="699.0" width="4.3" height="4.3" fill="#868686"/><rect x="564.4" y="699.0" width="4.3" height="4.3" fill="#cfa78f"/><rect x="568.1" y="699.0" width="4.3" height="4.3" fill="#cfa78f"/><rect x="571.7" y="699.0" width="4.3" height="4.3" fill="#d4d4d4"/><rect x="575.4" y="699.0" width="4.3" height="4.3" fill="#868686"/><rect x="579.1" y="699.0" width="4.3" height="4.3" fill="#868686"/><rect x="582.7" y="699.0" width="4.3" height="4.3" fill="#868686"/><rect x="553.4" y="702.7" width="4.3" height="4.3" fill="#d4d4d4"/><rect x="557.1" y="702.7" width="4.3" height="4.3" fill="#d4d4d4"/><rect x="560.7" y="702.7" width="4.3" height="4.3" fill="#868686"/><rect x="564.4" y="702.7" width="4.3" height="4.3" fill="#cfa78f"/><rect x="568.1" y="702.7" width="4.3" height="4.3" fill="#cfa78f"/><rect x="571.7" y="702.7" width="4.3" height="4.3" fill="#d4d4d4"/><rect x="575.4" y="702.7" width="4.3" height="4.3" fill="#868686"/><rect x="579.1" y="702.7" width="4.3" height="4.3" fill="#868686"/><rect x="582.7" y="702.7" width="4.3" height="4.3" fill="#d4d4d4"/><rect x="553.4" y="706.3" width="4.3" height="4.3" fill="#d4d4d4"/><rect x="557.1" y="706.3" width="4.3" height="4.3" fill="#d4d4d4"/><rect x="560.7" y="706.3" width="4.3" height="4.3" fill="#868686"/><rect x="564.4" y="706.3" width="4.3" height="4.3" fill="#868686"/><rect x="568.1" y="706.3" width="4.3" height="4.3" fill="#868686"/><rect x="571.7" y="706.3" width="4.3" height="4.3" fill="#cfa78f"/><rect x="575.4" y="706.3" width="4.3" height="4.3" fill="#a9a9a9"/><rect x="579.1" y="706.3" width="4.3" height="4.3" fill="#868686"/><rect x="582.7" y="706.3" width="4.3" height="4.3" fill="#d4d4d4"/><rect x="553.4" y="710.0" width="4.3" height="4.3" fill="#d4d4d4"/><rect x="557.1" y="710.0" width="4.3" height="4.3" fill="#e0b78e"/><rect x="560.7" y="710.0" width="4.3" height="4.3" fill="#d4d4d4"/><rect x="564.4" y="710.0" width="4.3" height="4.3" fill="#868686"/><rect x="568.1" y="710.0" width="4.3" height="4.3" fill="#868686"/><rect x="571.7" y="710.0" width="4.3" height="4.3" fill="#a9a9a9"/><rect x="575.4" y="710.0" width="4.3" height="4.3" fill="#e0b78e"/><rect x="579.1" y="710.0" width="4.3" height="4.3" fill="#868686"/><rect x="582.7" y="710.0" width="4.3" height="4.3" fill="#868686"/><rect x="553.4" y="713.7" width="4.3" height="4.3" fill="#d4d4d4"/><rect x="557.1" y="713.7" width="4.3" height="4.3" fill="#e0b78e"/><rect x="560.7" y="713.7" width="4.3" height="4.3" fill="#d4d4d4"/><rect x="564.4" y="713.7" width="4.3" height="4.3" fill="#a9a9a9"/><rect x="568.1" y="713.7" width="4.3" height="4.3" fill="#868686"/><rect x="571.7" y="713.7" width="4.3" height="4.3" fill="#a9a9a9"/><rect x="575.4" y="713.7" width="4.3" height="4.3" fill="#868686"/><rect x="579.1" y="713.7" width="4.3" height="4.3" fill="#868686"/><rect x="582.7" y="713.7" width="4.3" height="4.3" fill="#868686"/><rect x="553.4" y="717.3" width="4.3" height="4.3" fill="#d4d4d4"/><rect x="557.1" y="717.3" width="4.3" height="4.3" fill="#d4d4d4"/><rect x="560.7" y="717.3" width="4.3" height="4.3" fill="#a9a9a9"/><rect x="564.4" y="717.3" width="4.3" height="4.3" fill="#d4d4d4"/><rect x="568.1" y="717.3" width="4.3" height="4.3" fill="#d4d4d4"/><rect x="571.7" y="717.3" width="4.3" height="4.3" fill="#cfa78f"/><rect x="575.4" y="717.3" width="4.3" height="4.3" fill="#a9a9a9"/><rect x="579.1" y="717.3" width="4.3" height="4.3" fill="#868686"/><rect x="582.7" y="717.3" width="4.3" height="4.3" fill="#868686"/></g></g>
<clipPath id="a6"><circle cx="570.2" cy="792.8" r="16.5"/></clipPath><g clip-path="url(#a6)"><rect x="551.7" y="774.3" width="37.0" height="37.0" fill="#a4a4a4"/><g filter="url(#avb)"><rect x="553.4" y="776.0" width="4.3" height="4.3" fill="#a4a4a4"/><rect x="557.1" y="776.0" width="4.3" height="4.3" fill="#a4a4a4"/><rect x="560.7" y="776.0" width="4.3" height="4.3" fill="#a4a4a4"/><rect x="564.4" y="776.0" width="4.3" height="4.3" fill="#c4c4c4"/><rect x="568.1" y="776.0" width="4.3" height="4.3" fill="#c4c4c4"/><rect x="571.7" y="776.0" width="4.3" height="4.3" fill="#c4c4c4"/><rect x="575.4" y="776.0" width="4.3" height="4.3" fill="#c4c4c4"/><rect x="579.1" y="776.0" width="4.3" height="4.3" fill="#7e7e7e"/><rect x="582.7" y="776.0" width="4.3" height="4.3" fill="#7e7e7e"/><rect x="553.4" y="779.7" width="4.3" height="4.3" fill="#a4a4a4"/><rect x="557.1" y="779.7" width="4.3" height="4.3" fill="#c99f88"/><rect x="560.7" y="779.7" width="4.3" height="4.3" fill="#c4c4c4"/><rect x="564.4" y="779.7" width="4.3" height="4.3" fill="#7e7e7e"/><rect x="568.1" y="779.7" width="4.3" height="4.3" fill="#7e7e7e"/><rect x="571.7" y="779.7" width="4.3" height="4.3" fill="#7e7e7e"/><rect x="575.4" y="779.7" width="4.3" height="4.3" fill="#c4c4c4"/><rect x="579.1" y="779.7" width="4.3" height="4.3" fill="#7e7e7e"/><rect x="582.7" y="779.7" width="4.3" height="4.3" fill="#7e7e7e"/><rect x="553.4" y="783.3" width="4.3" height="4.3" fill="#a4a4a4"/><rect x="557.1" y="783.3" width="4.3" height="4.3" fill="#c4c4c4"/><rect x="560.7" y="783.3" width="4.3" height="4.3" fill="#7e7e7e"/><rect x="564.4" y="783.3" width="4.3" height="4.3" fill="#7e7e7e"/><rect x="568.1" y="783.3" width="4.3" height="4.3" fill="#d9b097"/><rect x="571.7" y="783.3" width="4.3" height="4.3" fill="#d9b097"/><rect x="575.4" y="783.3" width="4.3" height="4.3" fill="#e3c198"/><rect x="579.1" y="783.3" width="4.3" height="4.3" fill="#c4c4c4"/><rect x="582.7" y="783.3" width="4.3" height="4.3" fill="#a4a4a4"/><rect x="553.4" y="787.0" width="4.3" height="4.3" fill="#a4a4a4"/><rect x="557.1" y="787.0" width="4.3" height="4.3" fill="#a4a4a4"/><rect x="560.7" y="787.0" width="4.3" height="4.3" fill="#7e7e7e"/><rect x="564.4" y="787.0" width="4.3" height="4.3" fill="#7e7e7e"/><rect x="568.1" y="787.0" width="4.3" height="4.3" fill="#d9b097"/><rect x="571.7" y="787.0" width="4.3" height="4.3" fill="#e6e6e6"/><rect x="575.4" y="787.0" width="4.3" height="4.3" fill="#e3c198"/><rect x="579.1" y="787.0" width="4.3" height="4.3" fill="#c4c4c4"/><rect x="582.7" y="787.0" width="4.3" height="4.3" fill="#c4c4c4"/><rect x="553.4" y="790.7" width="4.3" height="4.3" fill="#a4a4a4"/><rect x="557.1" y="790.7" width="4.3" height="4.3" fill="#c99f88"/><rect x="560.7" y="790.7" width="4.3" height="4.3" fill="#7e7e7e"/><rect x="564.4" y="790.7" width="4.3" height="4.3" fill="#d9b097"/><rect x="568.1" y="790.7" width="4.3" height="4.3" fill="#d9b097"/><rect x="571.7" y="790.7" width="4.3" height="4.3" fill="#e3c198"/><rect x="575.4" y="790.7" width="4.3" height="4.3" fill="#e3c198"/><rect x="579.1" y="790.7" width="4.3" height="4.3" fill="#c99f88"/><rect x="582.7" y="790.7" width="4.3" height="4.3" fill="#a4a4a4"/><rect x="553.4" y="794.3" width="4.3" height="4.3" fill="#a4a4a4"/><rect x="557.1" y="794.3" width="4.3" height="4.3" fill="#a4a4a4"/><rect x="560.7" y="794.3" width="4.3" height="4.3" fill="#7e7e7e"/><rect x="564.4" y="794.3" width="4.3" height="4.3" fill="#d9b097"/><rect x="568.1" y="794.3" width="4.3" height="4.3" fill="#e3c198"/><rect x="571.7" y="794.3" width="4.3" height="4.3" fill="#e3c198"/><rect x="575.4" y="794.3" width="4.3" height="4.3" fill="#c4c4c4"/><rect x="579.1" y="794.3" width="4.3" height="4.3" fill="#c99f88"/><rect x="582.7" y="794.3" width="4.3" height="4.3" fill="#a4a4a4"/><rect x="553.4" y="798.0" width="4.3" height="4.3" fill="#a4a4a4"/><rect x="557.1" y="798.0" width="4.3" height="4.3" fill="#c99f88"/><rect x="560.7" y="798.0" width="4.3" height="4.3" fill="#e6e6e6"/><rect x="564.4" y="798.0" width="4.3" height="4.3" fill="#d9b097"/><rect x="568.1" y="798.0" width="4.3" height="4.3" fill="#e3c198"/><rect x="571.7" y="798.0" width="4.3" height="4.3" fill="#e3c198"/><rect x="575.4" y="798.0" width="4.3" height="4.3" fill="#c4c4c4"/><rect x="579.1" y="798.0" width="4.3" height="4.3" fill="#c4c4c4"/><rect x="582.7" y="798.0" width="4.3" height="4.3" fill="#a4a4a4"/><rect x="553.4" y="801.7" width="4.3" height="4.3" fill="#a4a4a4"/><rect x="557.1" y="801.7" width="4.3" height="4.3" fill="#c99f88"/><rect x="560.7" y="801.7" width="4.3" height="4.3" fill="#e6e6e6"/><rect x="564.4" y="801.7" width="4.3" height="4.3" fill="#e6e6e6"/><rect x="568.1" y="801.7" width="4.3" height="4.3" fill="#e6e6e6"/><rect x="571.7" y="801.7" width="4.3" height="4.3" fill="#a4a4a4"/><rect x="575.4" y="801.7" width="4.3" height="4.3" fill="#7e7e7e"/><rect x="579.1" y="801.7" width="4.3" height="4.3" fill="#c99f88"/><rect x="582.7" y="801.7" width="4.3" height="4.3" fill="#a4a4a4"/><rect x="553.4" y="805.3" width="4.3" height="4.3" fill="#a4a4a4"/><rect x="557.1" y="805.3" width="4.3" height="4.3" fill="#c99f88"/><rect x="560.7" y="805.3" width="4.3" height="4.3" fill="#c99f88"/><rect x="564.4" y="805.3" width="4.3" height="4.3" fill="#e6e6e6"/><rect x="568.1" y="805.3" width="4.3" height="4.3" fill="#e6e6e6"/><rect x="571.7" y="805.3" width="4.3" height="4.3" fill="#c4c4c4"/><rect x="575.4" y="805.3" width="4.3" height="4.3" fill="#a4a4a4"/><rect x="579.1" y="805.3" width="4.3" height="4.3" fill="#a4a4a4"/><rect x="582.7" y="805.3" width="4.3" height="4.3" fill="#a4a4a4"/></g></g>
<circle cx="570.3" cy="881" r="16.5" fill="#dd9fc3"/>
</svg><!--AVEND-->

<div class="abs" style="left:818px;top:483.1px;width:73px;height:1px;background:#c7c7c7"></div>
<div class="abs" style="left:818px;top:571.2px;width:73px;height:1px;background:#c7c7c7"></div>
<div class="abs" style="left:818px;top:659.3px;width:73px;height:1px;background:#c7c7c7"></div>
<div class="abs" style="left:818px;top:747.4px;width:73px;height:1px;background:#c7c7c7"></div>
<div class="abs" style="left:818px;top:835.5px;width:73px;height:1px;background:#c7c7c7"></div>
<!-- badges -->
<div class="abs bd" style="top:426.15px;width:87px"></div><div class="abs bs" style="top:434.90px;background:#a996dc"></div>
<div class="abs bd" style="top:514.25px;width:113px"></div><div class="abs bs" style="top:523.00px;background:#93d6a5"></div>
<div class="abs bd" style="top:602.35px;width:139px"></div><div class="abs bs" style="top:611.10px;background:#c986af"></div>
<div class="abs bd" style="top:690.45px;width:93px"></div><div class="abs bs" style="top:699.20px;background:#dcb995"></div>
<div class="abs bd" style="top:778.55px;width:87px"></div><div class="abs bs" style="top:787.30px;background:#a996dc"></div>
<div class="abs bd" style="top:866.65px;width:139px"></div><div class="abs bs" style="top:875.40px;background:#c986af"></div>

<!-- sentiment spotlight panel -->
<div id="panel" class="abs"></div>
<div class="abs pl" style="top:481.80px"></div>
<div class="abs pl" style="top:567.85px"></div>
<div class="abs pl" style="top:653.90px"></div>
<div class="abs pl" style="top:739.95px"></div>
<div class="abs pl" style="top:826.00px"></div>
<div class="abs seg" style="left:1414.3px;top:481.80px;width:73.2px"></div>
<div class="abs seg" style="left:1414.3px;top:567.85px;width:73.2px"></div>
<div class="abs seg" style="left:1414.3px;top:653.90px;width:73.2px"></div>
<div class="abs seg" style="left:1414.3px;top:739.95px;width:73.2px"></div>
<div class="abs seg" style="left:1414.3px;top:826.00px;width:73.2px"></div>
<div class="abs dot" style="left:1150px;top:432.90px;background:#d2d2d2"></div>
<div class="abs dot" style="left:1150px;top:518.98px;background:#1fa245"></div>
<div class="abs dot" style="left:1150px;top:605.06px;background:#ec1414"></div>
<div class="abs dot" style="left:1150px;top:691.14px;background:#ec1414"></div>
<div class="abs dot" style="left:1150px;top:777.22px;background:#d2d2d2"></div>
<div class="abs dot" style="left:1150px;top:863.30px;background:#ec1414"></div>

<span class="t" id="t0" style="left:148.9px;top:193.00px;font-size:23px;font-weight:400;color:#8e8e8e;letter-spacing:0.575px;-webkit-text-stroke:0.35px #8e8e8e;">Inbox</span>
<span class="t" id="t1" style="left:148.9px;top:249.50px;font-size:23px;font-weight:400;color:#8e8e8e;letter-spacing:1.113px;-webkit-text-stroke:0.35px #8e8e8e;">Launchpad</span>
<span class="t" id="t2" style="left:148.5px;top:306.10px;font-size:23px;font-weight:400;color:#8e8e8e;letter-spacing:1.229px;-webkit-text-stroke:0.35px #8e8e8e;">Contacts</span>
<span class="t" id="t3" style="left:148.5px;top:363.00px;font-size:23px;font-weight:400;color:#8e8e8e;letter-spacing:0.925px;-webkit-text-stroke:0.35px #8e8e8e;">Contact ce...</span>
<span class="t" id="t4" style="left:350.3px;top:363.40px;font-size:18px;font-weight:400;color:#70ae8f;letter-spacing:0.762px;-webkit-text-stroke:0.35px #70ae8f;">Available</span>
<span class="t" id="t5" style="left:148.5px;top:419.80px;font-size:23px;font-weight:400;color:#8e8e8e;letter-spacing:1.054px;-webkit-text-stroke:0.35px #8e8e8e;">Coaching group</span>
<span class="t" id="t6" style="left:148.5px;top:476.10px;font-size:23px;font-weight:400;color:#8e8e8e;letter-spacing:0.629px;-webkit-text-stroke:0.35px #8e8e8e;">Channels</span>
<span class="t" id="t7" style="left:149.5px;top:532.90px;font-size:23px;font-weight:400;color:#8e8e8e;letter-spacing:0.650px;-webkit-text-stroke:0.35px #8e8e8e;">Threads</span>
<span class="t" id="t8" style="left:149.3px;top:607.80px;font-size:19px;font-weight:700;color:#8c8c8c;letter-spacing:0.175px;">Favorites</span>
<span class="t" id="t9" style="left:149.3px;top:657.80px;font-size:23px;font-weight:400;color:#8e8e8e;letter-spacing:0.778px;-webkit-text-stroke:0.35px #8e8e8e;">Zoe Brooks</span>
<span class="t" id="t10" style="left:148.5px;top:715.00px;font-size:23px;font-weight:400;color:#8e8e8e;letter-spacing:1.260px;-webkit-text-stroke:0.35px #8e8e8e;">design</span>
<span class="t" id="t11" style="left:148.5px;top:772.20px;font-size:23px;font-weight:400;color:#8e8e8e;letter-spacing:0.528px;-webkit-text-stroke:0.35px #8e8e8e;">Claire Reynolds, Lori S...</span>
<span class="t" id="t12" style="left:148.7px;top:828.00px;font-size:23px;font-weight:400;color:#8e8e8e;letter-spacing:0.800px;-webkit-text-stroke:0.35px #8e8e8e;">Maria Rodriguez</span>
<span class="t" id="t13" style="left:1105.5px;top:105.00px;font-size:18.5px;font-weight:400;color:#a8a8a8;letter-spacing:0.623px;-webkit-text-stroke:0.35px #a8a8a8;">Search Dialpad</span>
<span class="t" id="t14" style="left:585.9px;top:194.80px;font-size:26px;font-weight:700;color:#707070;letter-spacing:0.593px;">West Coast Sales</span>
<span class="t" id="t15" style="left:585.3px;top:228.30px;font-size:16.4px;font-weight:400;color:#9a9a9a;letter-spacing:1.077px;-webkit-text-stroke:0.35px #9a9a9a;">(238) 630-0972</span>
<span class="t" id="t16" style="left:558.7px;top:287.80px;font-size:21px;font-weight:400;color:#919191;letter-spacing:0.611px;-webkit-text-stroke:0.35px #919191;">Hold Queue</span>
<span class="t" id="t17" style="left:715.7px;top:287.80px;font-size:21px;font-weight:400;color:#a795df;letter-spacing:0.522px;-webkit-text-stroke:0.35px #a795df;">Live calls</span>
<span class="t" id="t18" style="left:847.9px;top:287.80px;font-size:21px;font-weight:400;color:#919191;letter-spacing:0.320px;-webkit-text-stroke:0.35px #919191;">Agents</span>
<span class="t" id="t19" style="left:955.3px;top:287.80px;font-size:21px;font-weight:400;color:#919191;letter-spacing:0.550px;-webkit-text-stroke:0.35px #919191;">New</span>
<span class="t" id="t20" style="left:1041.1px;top:287.80px;font-size:21px;font-weight:400;color:#919191;letter-spacing:0.400px;-webkit-text-stroke:0.35px #919191;">All</span>
<span class="t" id="t21" style="left:1103.3px;top:287.80px;font-size:21px;font-weight:400;color:#919191;letter-spacing:0.980px;-webkit-text-stroke:0.35px #919191;">Missed</span>
<span class="t" id="t22" style="left:1214.3px;top:287.80px;font-size:21px;font-weight:400;color:#919191;letter-spacing:0.600px;-webkit-text-stroke:0.35px #919191;">Messages</span>
<span class="t" id="t23" style="left:1356.7px;top:287.80px;font-size:21px;font-weight:400;color:#919191;letter-spacing:0.467px;-webkit-text-stroke:0.35px #919191;">Voicemails</span>
<span class="t" id="t24" style="left:1501.9px;top:287.80px;font-size:21px;font-weight:400;color:#919191;letter-spacing:0.444px;-webkit-text-stroke:0.35px #919191;">Recordings</span>
<span class="t" id="t25" style="left:554.5px;top:347.50px;font-size:16.5px;font-weight:400;color:#838383;letter-spacing:0.075px;-webkit-text-stroke:0.35px #838383;">Agent</span>
<span class="t" id="t26" style="left:851.3px;top:347.50px;font-size:16.5px;font-weight:400;color:#838383;letter-spacing:0.471px;-webkit-text-stroke:0.35px #838383;">Customer</span>
<span class="t" id="t27" style="left:1148.1px;top:347.50px;font-size:16.5px;font-weight:400;color:#838383;letter-spacing:0.450px;-webkit-text-stroke:0.35px #838383;">Sentiment</span>
<span class="t" id="t28" style="left:1446.1px;top:347.50px;font-size:16.5px;font-weight:400;color:#838383;letter-spacing:0.245px;-webkit-text-stroke:0.35px #838383;">Call Purpose</span>
<span class="t" id="t29" style="left:597.9px;top:426.10px;font-size:21px;font-weight:400;color:#767676;letter-spacing:0.218px;-webkit-text-stroke:0.35px #767676;">Max Williams</span>
<span class="t" id="t30" style="left:851.9px;top:426.10px;font-size:21px;font-weight:400;color:#767676;letter-spacing:0.864px;-webkit-text-stroke:0.35px #767676;">+13605623502</span>
<span class="t" id="t31" style="left:597.9px;top:514.20px;font-size:21px;font-weight:400;color:#767676;letter-spacing:0.283px;-webkit-text-stroke:0.35px #767676;">Sophia Miller</span>
<span class="t" id="t32" style="left:851.9px;top:514.20px;font-size:21px;font-weight:400;color:#767676;letter-spacing:0.736px;-webkit-text-stroke:0.35px #767676;">+14229087443</span>
<span class="t" id="t33" style="left:598.9px;top:603.30px;font-size:21px;font-weight:400;color:#767676;letter-spacing:-0.014px;-webkit-text-stroke:0.35px #767676;">Zoey Kim</span>
<span class="t" id="t34" style="left:851.9px;top:603.30px;font-size:21px;font-weight:400;color:#767676;letter-spacing:0.373px;-webkit-text-stroke:0.35px #767676;">+19172426790</span>
<span class="t" id="t35" style="left:597.9px;top:691.40px;font-size:21px;font-weight:400;color:#767676;letter-spacing:0.090px;-webkit-text-stroke:0.35px #767676;">Kevin Singh</span>
<span class="t" id="t36" style="left:851.9px;top:691.40px;font-size:21px;font-weight:400;color:#767676;letter-spacing:0.555px;-webkit-text-stroke:0.35px #767676;">+19145560667</span>
<span class="t" id="t37" style="left:598.1px;top:778.50px;font-size:21px;font-weight:400;color:#767676;letter-spacing:0.191px;-webkit-text-stroke:0.35px #767676;">Alex Johnson</span>
<span class="t" id="t38" style="left:851.9px;top:778.50px;font-size:21px;font-weight:400;color:#767676;letter-spacing:0.273px;-webkit-text-stroke:0.35px #767676;">+13059014718</span>
<span class="t" id="t39" style="left:597.9px;top:866.60px;font-size:21px;font-weight:400;color:#767676;letter-spacing:0.200px;-webkit-text-stroke:0.35px #767676;">Richard Taylor</span>
<span class="t" id="t40" style="left:851.9px;top:866.60px;font-size:21px;font-weight:400;color:#767676;letter-spacing:0.491px;-webkit-text-stroke:0.35px #767676;">+16789998212</span>
<span class="t" id="t41" style="left:1168.5px;top:424.50px;font-size:21px;font-weight:400;color:#0a0a0a;letter-spacing:0.300px;-webkit-text-stroke:0.35px #0a0a0a;">Neutral</span>
<span class="t" id="t42" style="left:1168.5px;top:510.58px;font-size:21px;font-weight:400;color:#0a0a0a;letter-spacing:0.243px;-webkit-text-stroke:0.35px #0a0a0a;">Positive</span>
<span class="t" id="t43" style="left:1168.5px;top:596.66px;font-size:21px;font-weight:400;color:#0a0a0a;letter-spacing:0.286px;-webkit-text-stroke:0.35px #0a0a0a;">Negative</span>
<span class="t" id="t44" style="left:1168.5px;top:682.74px;font-size:21px;font-weight:400;color:#0a0a0a;letter-spacing:0.286px;-webkit-text-stroke:0.35px #0a0a0a;">Negative</span>
<span class="t" id="t45" style="left:1168.5px;top:768.82px;font-size:21px;font-weight:400;color:#0a0a0a;letter-spacing:0.300px;-webkit-text-stroke:0.35px #0a0a0a;">Neutral</span>
<span class="t" id="t46" style="left:1168.5px;top:854.90px;font-size:21px;font-weight:400;color:#0a0a0a;letter-spacing:0.286px;-webkit-text-stroke:0.35px #0a0a0a;">Negative</span>
<span class="t" id="t47" style="left:1470.9px;top:424.70px;font-size:16.5px;font-weight:700;color:#7a7a7a;letter-spacing:0.350px;">Billing</span>
<span class="t" id="t48" style="left:1470.9px;top:512.80px;font-size:16.5px;font-weight:700;color:#7a7a7a;letter-spacing:0.386px;">Purchase</span>
<span class="t" id="t49" style="left:1470.9px;top:600.90px;font-size:16.5px;font-weight:700;color:#7a7a7a;letter-spacing:0.518px;">Cancellation</span>
<span class="t" id="t50" style="left:1470.9px;top:689.00px;font-size:16.5px;font-weight:700;color:#7a7a7a;letter-spacing:0.340px;">Refund</span>
<span class="t" id="t51" style="left:1470.9px;top:777.10px;font-size:16.5px;font-weight:700;color:#7a7a7a;letter-spacing:0.350px;">Billing</span>
<span class="t" id="t52" style="left:1470.9px;top:865.20px;font-size:16.5px;font-weight:700;color:#7a7a7a;letter-spacing:0.518px;">Cancellation</span>
<span class="t" id="t53" style="left:559.9px;top:865.90px;font-size:15.5px;font-weight:700;color:#6f6a6d;letter-spacing:-0.100px;">RT</span>
</body>
</html>
